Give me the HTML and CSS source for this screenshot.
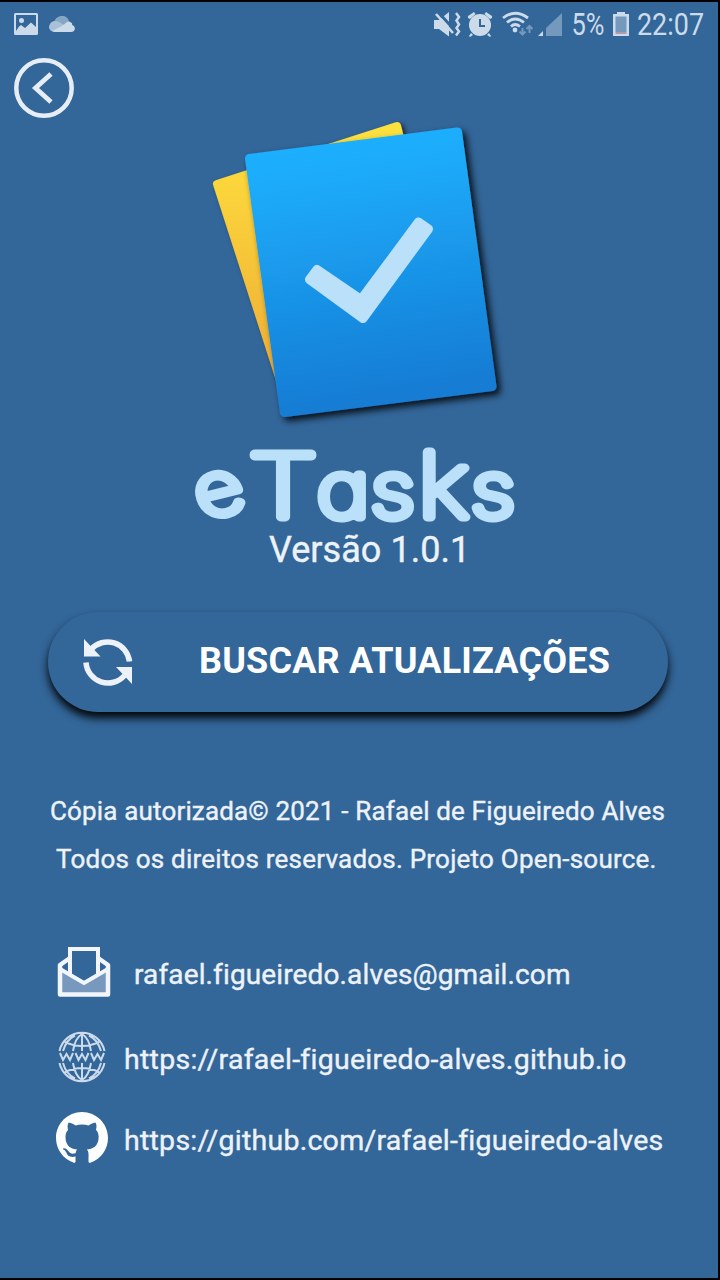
FILE: index.html
```html
<!DOCTYPE html>
<html lang="pt-BR">
<head>
<meta charset="utf-8">
<title>eTasks - Sobre</title>
<link rel="stylesheet" href="styles.css">
</head>
<body>
<div class="screen">
  <header class="status">
    <svg class="status-left" width="64" height="24" viewBox="0 0 64 24">
      <path fill="#cbdbe9" fill-rule="evenodd" d="M1.500 0H22.500Q24 0 24 1.500V20.500Q24 22 22.500 22H1.500Q0 22 0 20.500V1.500Q0 0 1.500 0ZM2 2V18L5 13.500 7 12 11 15 17 9.500 22 14V2Z"/>
      <circle cx="7.500" cy="7.500" r="2.500" fill="#cbdbe9"/>
      <path fill="#86a6c4" d="M40 10C41 5 44 3 48 3C52 3 54 5 55 8L58 12L48 17Z"/>
      <path fill="#a9c0d6" d="M40 19C36 18 34 15 35.500 12C37 8 41 7 45 9L55 15L47 19Z"/>
      <path fill="#cbdbe9" d="M38 18L48 13L53 9C57 8 59 11 58 12C62 13 62 19 57 19H41Z"/>
    </svg>
    <div class="status-right">
      <svg class="status-icons" width="128" height="28" viewBox="0 0 128 28">
        <path fill="#cbdbe9" d="M0 7H5L15 -1V23.500L5 16H0Z"/>
        <path d="M3 -2L21 17.500" stroke="#336699" stroke-width="3"/>
        <path d="M2 1L19 20" stroke="#cbdbe9" stroke-width="2.600"/>
        <g fill="#cbdbe9">
          <path d="M22 0L25 4 22.500 7.500 25 11.500 22.500 15 25 18.500 22 22.500" fill="none" stroke="#cbdbe9" stroke-width="2.500"/>
          <circle cx="46" cy="12" r="11"/>
          <path d="M34 5L34 3L40 -1L41.500 1L36 6ZM58 5V3L52 -1L50.500 1L56 6ZM37 20L39 22L36 24L35 23ZM55 20L53 22L56 24L57 23Z"/>
          <circle cx="81" cy="17" r="2.400"/>
        </g>
        <path d="M46 6V13H51" fill="none" stroke="#336699" stroke-width="2"/>
        <g fill="none" stroke="#cbdbe9" stroke-width="2.800">
          <path d="M69 5Q81 -4.500 94 5M73 9.500Q81 2.500 90 9.500M77 13.500Q81 9.500 86 13.500"/>
        </g>
        <path d="M88.500 15V22M85.500 18.500L88.500 21.500 91.500 18.500M95.500 20V13M92.500 16L95.500 13 98.500 16" fill="none" stroke="#7599bd" stroke-width="2"/>
        <path d="M109 18V23H104Z" fill="#cbdbe9"/>
        <path d="M128 0V23H112V15Z" fill="#7599bd"/>
      </svg>
      <svg class="percent" width="34" height="38"><text class="status-text" x="-0.500" y="28" textLength="33" lengthAdjust="spacingAndGlyphs">5%</text></svg>
      <svg class="battery" width="16" height="25" viewBox="0 0 16 25"><path fill="#cbdbe9" d="M4 0H12V2H16V24H0V2H4Z"/><path fill="#7599bd" d="M2.500 4.500H13.500V20H2.500Z"/><path fill="#b09aae" d="M2.500 20H13.500V22H2.500Z"/></svg>
      <svg class="clock" width="68" height="38"><text class="status-text" x="0" y="28" textLength="67" lengthAdjust="spacingAndGlyphs">22:07</text></svg>
    </div>
  </header>

  <a class="back" aria-label="Voltar">
    <svg width="60" height="60" viewBox="0 0 60 60" fill="none" stroke="#e6edf5"><circle cx="30" cy="30" r="27.700" stroke-width="4.500"/><path d="M37 16L21.500 30L37 44" stroke-width="4.800"/></svg>
  </a>

  <svg class="logo" width="330" height="322" viewBox="190 112 330 322">
    <defs>
      <linearGradient id="blue" x1="0" y1="0" x2="0.15" y2="1"><stop offset="0" stop-color="#1eb2ff"/><stop offset="0.2" stop-color="#1dabfa"/><stop offset="1" stop-color="#157cd4"/></linearGradient>
      <linearGradient id="yellow" x1="0" y1="0" x2="0" y2="1"><stop offset="0" stop-color="#ffe13c"/><stop offset="1" stop-color="#eeac36"/></linearGradient>
      <filter id="shade" x="-20%" y="-20%" width="140%" height="140%"><feDropShadow dx="4" dy="4" stdDeviation="3.500" flood-color="#000" flood-opacity="0.850"/></filter>
      <filter id="shade-soft" x="-20%" y="-20%" width="140%" height="140%"><feDropShadow dx="3" dy="2" stdDeviation="2.500" flood-color="#000" flood-opacity="0.600"/></filter>
    </defs>
    <path filter="url(#shade-soft)" d="M217 184L397 126L438 290L280 380Z" fill="url(#yellow)" stroke="url(#yellow)" stroke-width="8" stroke-linejoin="round"/>
    <path filter="url(#shade)" d="M249.500 158.500L457.500 132L492 386.500L284.500 412.500Z" fill="url(#blue)" stroke="url(#blue)" stroke-width="9" stroke-linejoin="round"/>
    <path d="M309.500 279.500L317 269.500L361 299.500L418.500 222L428.500 229L363 318.500Z" fill="#bbe0fa" stroke="#bbe0fa" stroke-width="9" stroke-linejoin="round"/>
  </svg>

  <svg class="title" width="330" height="92" viewBox="190 440 330 92">
    <text class="title-text" transform="scale(1.17 1)" y="516"><tspan x="173.400" y="519" rotate="-16" font-size="72">e</tspan><tspan x="212.300" y="517" font-size="87" textLength="59" lengthAdjust="spacingAndGlyphs">T</tspan><tspan x="270.900" y="517" font-size="77">a</tspan><tspan x="317" y="517" font-size="76">s</tspan><tspan x="357.300" y="517" font-size="89">k</tspan><tspan x="402.600" y="517" font-size="76">s</tspan></text>
  </svg>
  <div class="version">Versão 1.0.1</div>

  <button class="update">
    <svg width="50" height="50" viewBox="0 0 50 50"><g fill="none" stroke="#edf2f8" stroke-width="5.500"><path d="M8 12.500A22 22 0 0 1 46.500 24.500"/><path d="M3 25.500A22 22 0 0 0 41.500 38.500"/></g><path fill="#edf2f8" d="M1 2V19.500H17.500ZM49 47V30H33Z"/></svg>
    <span class="update-label">BUSCAR ATUALIZAÇÕES</span>
  </button>

  <div class="copyright">
    <div class="copy-a">Cópia autorizada© 2021 - Rafael de Figueiredo Alves</div>
    <div class="copy-b">Todos os direitos reservados. Projeto Open-source.</div>
  </div>

  <div class="links">
    <a class="link mail">
      <svg width="54" height="52" viewBox="0 0 54 52"><path fill="#7898be" d="M3 23L27 38L51 23V48H3Z"/><path fill="none" stroke="#f2f6fb" stroke-width="4.500" stroke-linejoin="round" d="M13 12L3 19V48.500H51V19L41 12"/><path fill="none" stroke="#f2f6fb" stroke-width="4" d="M3 23L27 37L51 23M13 28V3H41V28"/></svg>
      <span>rafael.figueiredo.alves@gmail.com</span>
    </a>
    <a class="link web">
      <svg width="48" height="48" viewBox="0 0 48 48"><g fill="none" stroke="#cbdbeb" stroke-width="2"><path d="M1.500 18A23 23 0 0 1 46.500 18M1.500 30A23 23 0 0 0 46.500 30M24 1V18M24 30V47M15 18Q17 5 24 1Q31 5 33 18M15 30Q17 43 24 47Q31 43 33 30M5 18Q8 7 17 2.500M43 18Q40 7 31 2.500M5 30Q8 41 17 45.500M43 30Q40 41 31 45.500M7 9Q24 17 41 9M7 39Q24 31 41 39"/><path d="M2 20L5 27L8.500 21L12 27L15 20M17.500 20L20.500 27L24 21L27.500 27L30.500 20M33 20L36 27L39.500 21L43 27L46 20"/></g></svg>
      <span>https://rafael-figueiredo-alves.github.io</span>
    </a>
    <a class="link git">
      <svg width="52" height="52" viewBox="0 0 16 16"><path fill="#fff" d="M8 0C3.580 0 0 3.580 0 8c0 3.540 2.290 6.530 5.470 7.590.4.070.55-.17.55-.38 0-.19-.01-.82-.01-1.490-2.010.37-2.530-.49-2.690-.94-.09-.23-.48-.94-.82-1.130-.28-.15-.68-.52-.01-.53.63-.01 1.080.58 1.230.82.72 1.210 1.870.87 2.330.66.07-.52.28-.87.51-1.070-1.780-.2-3.640-.89-3.640-3.950 0-.87.31-1.590.82-2.150-.08-.2-.36-1.020.08-2.120 0 0 .67-.21 2.200.82.64-.18 1.320-.27 2-.27s1.360.09 2 .27c1.530-1.040 2.200-.82 2.200-.82.44 1.100.16 1.920.08 2.120.51.56.82 1.270.82 2.150 0 3.070-1.870 3.750-3.650 3.950.29.25.54.73.54 1.480 0 1.070-.01 1.930-.01 2.200 0 .21.15.46.55.38A8.010 8.010 0 0 0 16 8c0-4.420-3.580-8-8-8z"/></svg>
      <span>https://github.com/rafael-figueiredo-alves</span>
    </a>
  </div>
</div>
</body>
</html>
```
FILE: styles.css
```css
* { box-sizing: border-box; }
body { margin: 0; height: 1280px; display: flow-root; background: #000; font-family: Roboto, "Liberation Sans", sans-serif; }
svg { display: block; flex: none; overflow: visible; }
.screen { width: 718px; height: 1276px; margin-top: 2px; background: #336699; color: #edf2f8; display: flex; flex-direction: column; overflow: hidden; }
.status { height: 56px; flex: none; display: flex; justify-content: space-between; padding: 11px 13px 0 14px; }
.status-right { display: flex; align-items: flex-start; }
.status-text { font-size: 31px; fill: #cbdbe9; }
.percent { margin-left: 10px; margin-top: -6px; }
.battery { margin-left: 7px; margin-top: -1px; }
.clock { margin-left: 8px; margin-top: -6px; }
.back { height: 54px; margin-left: 14px; }
.logo { margin-left: 190px; }
.title { margin: 6px 0 0 190px; }
.title-text { font-family: Inter, "Noto Sans", sans-serif; font-weight: 100; font-feature-settings: "cv11"; fill: #bbe0f9; stroke: #bbe0f9; stroke-width: 9px; stroke-linejoin: round; stroke-linecap: round; }
.version { margin: -4px 0 0 269px; height: 44px; line-height: 44px; font-size: 36px; white-space: nowrap; letter-spacing: 0.05px; -webkit-text-stroke: 0.4px #edf2f8; }
.update { width: 620px; height: 100px; flex: none; margin: 40px 0 0 48px; padding: 0 0 0 35px; border: 0; border-radius: 50px; background: #336699; color: #fff; display: flex; align-items: center; gap: 66px; box-shadow: 0 6px 8px rgba(0, 0, 0, 0.95); font: bold 36px Roboto, sans-serif; white-space: nowrap; }
.update-label { letter-spacing: 0.2px; padding-bottom: 2px; }
.copyright { margin: 75px 0 0 50px; font-size: 26px; line-height: 48px; white-space: nowrap; letter-spacing: 0.16px; -webkit-text-stroke: 0.4px #edf2f8; }
.copy-b { margin-left: 6px; letter-spacing: 0.22px; }
.links { margin-top: 63px; font-size: 28px; white-space: nowrap; -webkit-text-stroke: 0.4px #edf2f8; }
.link { display: flex; align-items: center; }
.link span { padding-top: 4px; }
.mail { height: 52px; margin-left: 57px; gap: 23px; letter-spacing: 0.13px; }
.web { height: 48px; margin: 35px 0 0 58px; gap: 18px; font-size: 28.5px; letter-spacing: 0.27px; }
.git { height: 52px; margin: 31px 0 0 56px; gap: 16px; font-size: 28.5px; letter-spacing: 0.26px; }
```
